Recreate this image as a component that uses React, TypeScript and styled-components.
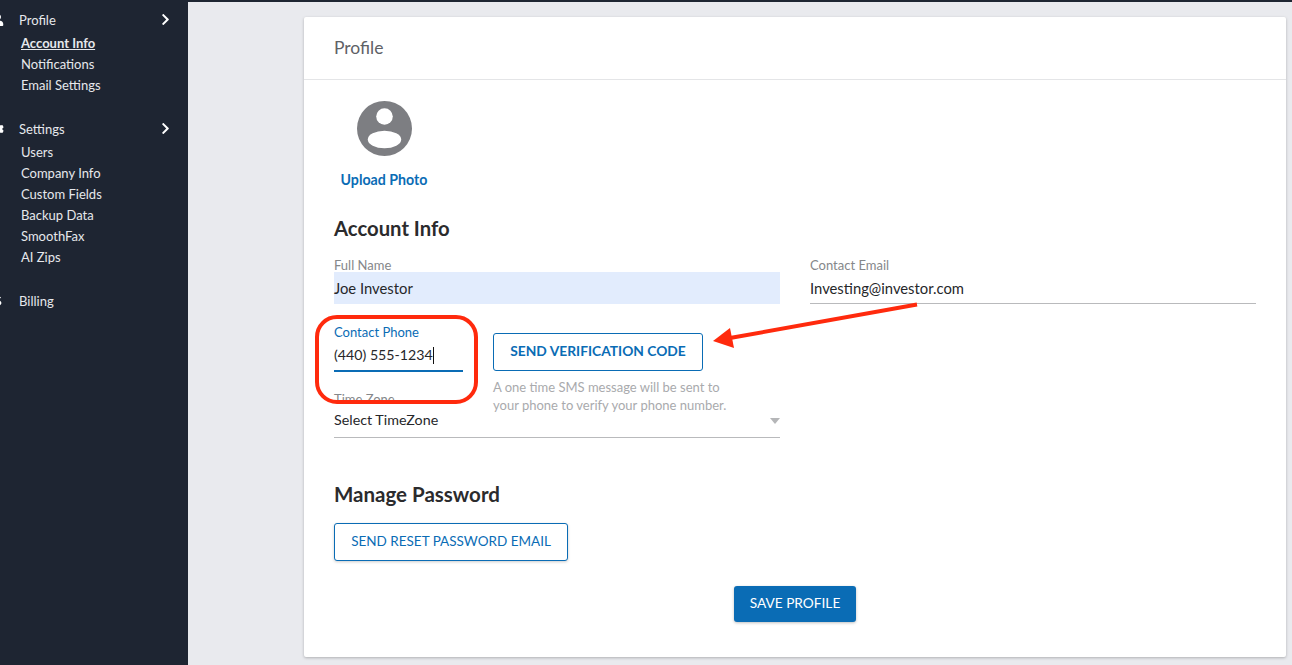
import React from 'react'
import styled, { createGlobalStyle } from 'styled-components'
import { FaChevronRight, FaUser, FaCog, FaDollarSign } from 'react-icons/fa'

const GlobalStyle = createGlobalStyle`
  html, body {
    margin: 0;
    padding: 0;
    height: 100%;
    overflow: hidden;
    font-family: 'Lato', 'Liberation Sans', sans-serif;
  }
  * {
    box-sizing: border-box;
  }
`

const groups = [
  {
    title: 'Profile',
    icon: <FaUser />,
    links: ['Account Info', 'Notifications', 'Email Settings'],
    arrow: true,
  },
  {
    title: 'Settings',
    icon: <FaCog />,
    links: ['Users', 'Company Info', 'Custom Fields', 'Backup Data', 'SmoothFax', 'AI Zips'],
    arrow: true,
  },
  { title: 'Billing', icon: <FaDollarSign />, links: [], arrow: false },
]

export default function App() {
  return (
    <Page>
      <GlobalStyle />
      <Sidebar>
        {groups.map((g) => (
          <Group key={g.title}>
            <GroupHead>
              <GroupIcon>{g.icon}</GroupIcon>
              <GroupTitle>{g.title}</GroupTitle>
              {g.arrow && (
                <Arrow>
                  <FaChevronRight />
                </Arrow>
              )}
            </GroupHead>
            {g.links.map((l) => (
              <SideLink key={l} $active={l === 'Account Info'}>
                {l}
              </SideLink>
            ))}
          </Group>
        ))}
      </Sidebar>
      <Main>
        <Card>
          <CardHead>Profile</CardHead>
          <CardBody>
            <PhotoBox>
              <Avatar viewBox="0 0 55 55" aria-hidden="true">
                <circle cx="27.5" cy="27.5" r="27.5" fill="#7d7e82" />
                <circle cx="27.5" cy="15.5" r="8.3" fill="#fff" />
                <ellipse cx="27.5" cy="38.5" rx="16.7" ry="8.8" fill="#fff" />
              </Avatar>
              <UploadLink>Upload Photo</UploadLink>
            </PhotoBox>
            <SectionTitle>Account Info</SectionTitle>
            <FormGrid>
              <LeftColumn>
                <Field>
                  <FieldLabel>Full Name</FieldLabel>
                  <FieldValue $filled>Joe Investor</FieldValue>
                </Field>
                <PhoneRow>
                  <PhoneField>
                    <FieldLabel $focused>Contact Phone</FieldLabel>
                    <FieldValue $focused>
                      (440) 555-1234<Caret />
                    </FieldValue>
                  </PhoneField>
                  <VerifyBox>
                    <VerifyButton>SEND VERIFICATION CODE</VerifyButton>
                    <Hint>
                      A one time SMS message will be sent to
                      <br />
                      your phone to verify your phone number.
                    </Hint>
                  </VerifyBox>
                </PhoneRow>
                <TimeField>
                  <TimeLabel>Time Zone</TimeLabel>
                  <SelectValue>
                    Select TimeZone
                    <SelectArrow />
                  </SelectValue>
                </TimeField>
              </LeftColumn>
              <RightColumn>
                <Field>
                  <FieldLabel>Contact Email</FieldLabel>
                  <FieldValue>Investing@investor.com</FieldValue>
                </Field>
              </RightColumn>
            </FormGrid>
            <PasswordTitle>Manage Password</PasswordTitle>
            <ResetButton>SEND RESET PASSWORD EMAIL</ResetButton>
            <Footer>
              <SaveButton>SAVE PROFILE</SaveButton>
            </Footer>
          </CardBody>
        </Card>
      </Main>
      <Highlight />
      <Callout viewBox="0 0 220 50" aria-hidden="true">
        <line x1="204" y1="3.5" x2="17" y2="37" stroke="#ff2a0d" strokeWidth="4" />
        <polygon points="0,40 17,27 21,47" fill="#ff2a0d" />
      </Callout>
    </Page>
  )
}

const Page = styled.div`
  position: relative;
  display: flex;
  width: 1292px;
  height: 665px;
  overflow: hidden;
  background: #e9eaee;
`
const Sidebar = styled.nav`
  width: 188px;
  flex: none;
  padding-top: 11px;
  overflow: hidden;
  background: #1e2532;
`
const Group = styled.div`
  margin-bottom: 24px;
`
const GroupHead = styled.div`
  position: relative;
  display: flex;
  align-items: center;
  height: 18px;
  margin-bottom: 4px;
  color: #e6e8ec;
  font-size: 13px;
`
const GroupIcon = styled.span`
  display: flex;
  width: 19px;
  margin-left: -8px;
  margin-right: 8px;
  color: #fff;
  font-size: 12px;
`
const GroupTitle = styled.span``
const Arrow = styled.span`
  position: absolute;
  left: 159px;
  top: 2px;
  color: #fff;
  font-size: 13px;
`
const SideLink = styled.div<{ $active?: boolean }>`
  margin-left: 21px;
  height: 21px;
  line-height: 20px;
  color: #e6e8ec;
  font-size: 13px;
  font-weight: ${(p) => (p.$active ? 700 : 400)};
  text-decoration: ${(p) => (p.$active ? 'underline' : 'none')};
`
const Main = styled.main`
  flex: 1;
  padding: 17px 6px 8px 116px;
  border-top: 2px solid #1e2532;
`
const Card = styled.section`
  height: 640px;
  margin-top: -2px;
  background: #fff;
  border-radius: 2px;
  box-shadow: 0 1px 3px rgba(0, 0, 0, 0.25);
`
const CardHead = styled.header`
  height: 63px;
  padding: 0 30px;
  line-height: 61px;
  border-bottom: 1px solid #e4e5e7;
  color: #5e6166;
  font-size: 17.5px;
`
const CardBody = styled.div`
  padding: 21px 30px 0;
`
const PhotoBox = styled.div`
  display: flex;
  flex-direction: column;
  align-items: center;
  width: 100px;
`
const Avatar = styled.svg`
  display: block;
  width: 55px;
  height: 55px;
  margin: 0 0 1px 1px;
`
const UploadLink = styled.a`
  margin-top: 14px;
  color: #0a6cb5;
  font-size: 14.2px;
  font-weight: 700;
  white-space: nowrap;
`
const SectionTitle = styled.h2`
  margin: 28px 0 0;
  color: #2b2b2d;
  font-size: 20.3px;
  font-weight: 700;
  line-height: 24px;
`
const FormGrid = styled.div`
  display: grid;
  grid-template-columns: 446px 446px;
  column-gap: 30px;
  margin-top: 18px;
`
const LeftColumn = styled.div``
const RightColumn = styled.div``
const Field = styled.div``
const FieldLabel = styled.div<{ $focused?: boolean }>`
  height: 14px;
  color: ${(p) => (p.$focused ? '#0a6cb5' : '#85878a')};
  font-size: 13px;
  line-height: ${(p) => (p.$focused ? '12px' : '14px')};
  white-space: nowrap;
`
const TimeLabel = styled(FieldLabel)`
  line-height: 18px;
`
const FieldValue = styled.div<{ $filled?: boolean; $focused?: boolean }>`
  position: relative;
  height: 32px;
  line-height: ${(p) => (p.$focused ? '29px' : '33px')};
  color: #26272a;
  font-size: ${(p) => (p.$focused ? '14.2px' : '14.8px')};
  background: ${(p) => (p.$filled ? '#e2ecfd' : 'transparent')};
  border-bottom: ${(p) =>
    p.$filled ? 'none' : p.$focused ? '2px solid #0a6cb5' : '1px solid #b9babc'};
`
const SelectValue = styled.div`
  position: relative;
  height: 34px;
  line-height: 31px;
  color: #26272a;
  font-size: 14.3px;
  border-bottom: 1px solid #b9babc;
`
const Caret = styled.span`
  display: inline-block;
  width: 1px;
  height: 17px;
  vertical-align: -4px;
  background: #111;
`
const PhoneRow = styled.div`
  display: flex;
  column-gap: 30px;
  margin-top: 22px;
`
const PhoneField = styled.div`
  width: 129px;
`
const VerifyBox = styled.div`
  margin-top: 7px;
`
const VerifyButton = styled.button`
  display: block;
  width: 210px;
  height: 38px;
  padding: 0 0 3px;
  background: #fff;
  border: 1px solid #0a6cb5;
  border-radius: 3px;
  color: #0a6cb5;
  font-family: inherit;
  font-size: 13.8px;
  font-weight: 700;
`
const Hint = styled.p`
  margin: 7px 0 0;
  color: #a9aaad;
  font-size: 13px;
  line-height: 18px;
  white-space: nowrap;
`
const TimeField = styled.div`
  margin-top: -24px;
`
const SelectArrow = styled.span`
  position: absolute;
  right: 0;
  top: 14px;
  border-left: 5px solid transparent;
  border-right: 5px solid transparent;
  border-top: 6px solid #b5b6b8;
`
const PasswordTitle = styled.h2`
  margin: 45px 0 0;
  color: #2b2b2d;
  font-size: 20.5px;
  font-weight: 700;
  line-height: 22px;
`
const ResetButton = styled.button`
  display: block;
  width: 234px;
  height: 38px;
  margin-top: 18px;
  padding: 0 0 2px;
  background: #fff;
  border: 1px solid #0a6cb5;
  border-radius: 3px;
  box-shadow: 0 1px 3px rgba(0, 0, 0, 0.2);
  color: #0a6cb5;
  font-family: inherit;
  font-size: 13.5px;
`
const Footer = styled.div`
  display: flex;
  justify-content: center;
  margin-top: 25px;
`
const SaveButton = styled.button`
  width: 122px;
  height: 36px;
  padding: 0 0 3px;
  background: #0a6cb5;
  border: none;
  border-radius: 3px;
  box-shadow: 0 1px 3px rgba(0, 0, 0, 0.25);
  color: #fff;
  font-family: inherit;
  font-size: 13.7px;
`
const Highlight = styled.div`
  position: absolute;
  left: 315px;
  top: 315px;
  width: 163px;
  height: 89px;
  border: 4px solid #ff2a0d;
  border-radius: 22px;
`
const Callout = styled.svg`
  position: absolute;
  left: 713px;
  top: 301px;
  width: 220px;
  height: 50px;
`
